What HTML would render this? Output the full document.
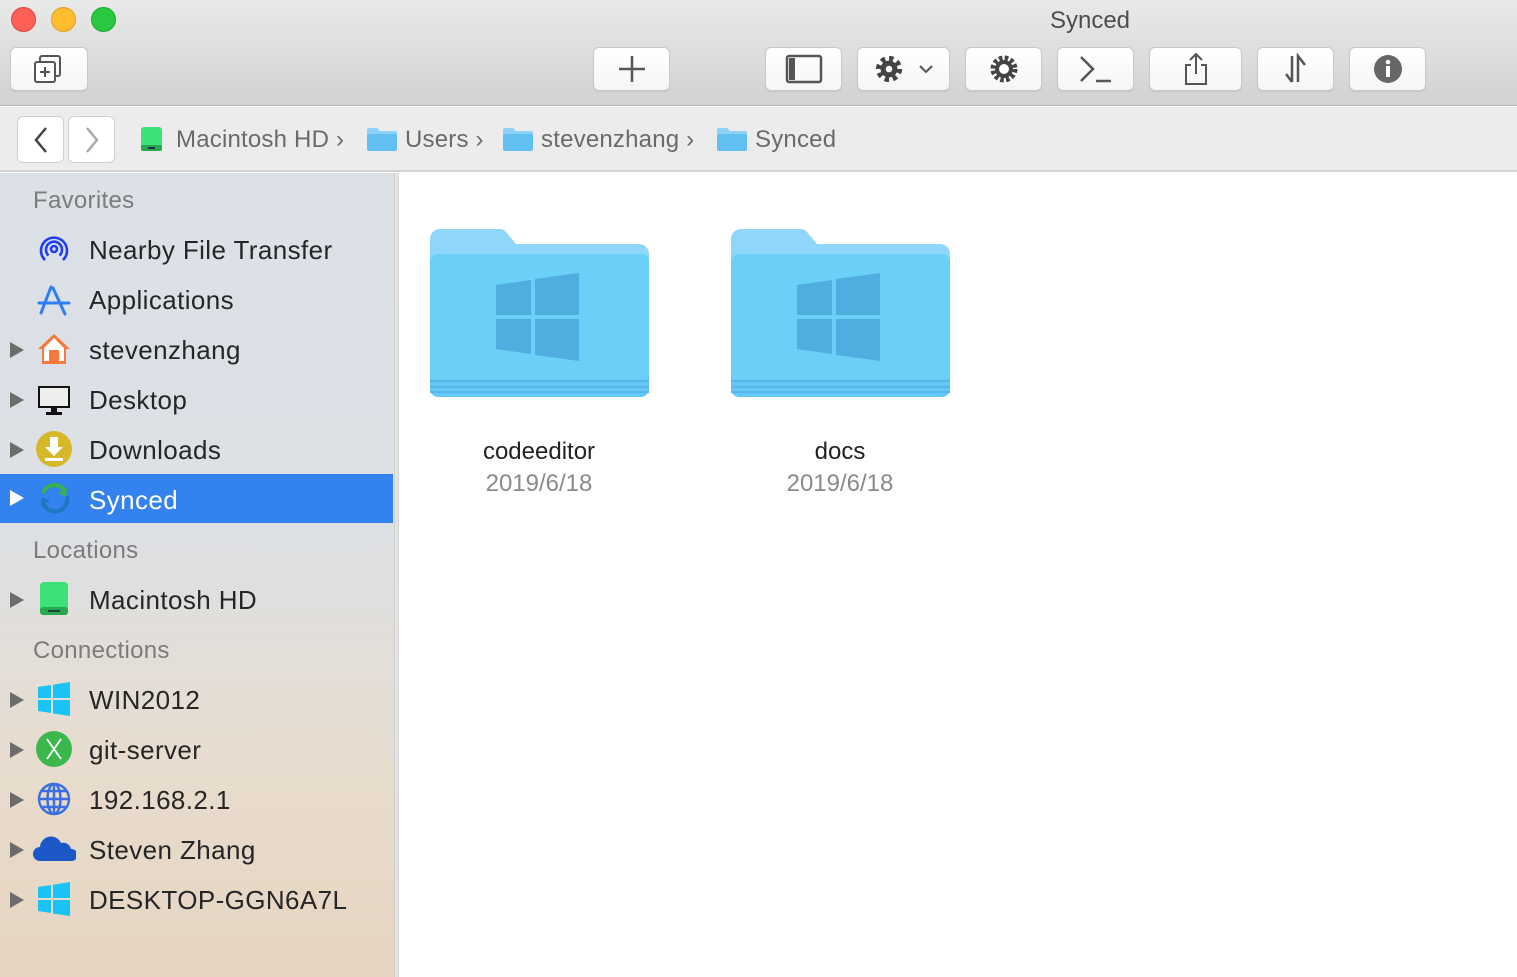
<!DOCTYPE html>
<html><head><meta charset="utf-8"><style>
*{margin:0;padding:0;box-sizing:border-box}
body{width:1517px;height:977px;overflow:hidden;font-family:"Liberation Sans",sans-serif;background:#fff;position:relative}
.abs{position:absolute}
#top{left:0;top:0;width:1517px;height:106px;background:linear-gradient(#e9e9e9,#d2d2d2);border-bottom:1px solid #b9b9b9}
.tl{position:absolute;top:7px;width:25px;height:25px;border-radius:50%}
.btn{position:absolute;top:47px;height:44px;background:linear-gradient(#fff,#f6f6f6);border:1px solid #c9c9c9;border-radius:6px;box-shadow:0 1px 1px rgba(0,0,0,.08);display:flex;align-items:center;justify-content:center}
#path{left:0;top:107px;width:1517px;height:65px;background:#ececec;border-bottom:2px solid #d3d3d3}
.pb{position:absolute;top:116px;width:47px;height:47px;background:#fff;border:1px solid #d0d0d0;border-radius:6px;display:flex;align-items:center;justify-content:center}
.pt{position:absolute;top:126px;font-size:24px;color:#6a6a6a;white-space:nowrap;letter-spacing:.2px}
#side{left:0;top:173px;width:394px;height:804px;background:linear-gradient(#dce1e8 0%,#dde0e4 45%,#e8dccd 75%,#e6d4c1 100%)}
#div{left:394px;top:173px;width:5px;height:804px;background:#e3e3e3;border-left:1px solid #cfcfcf;border-right:1px solid #d6d6d6}
.hd{position:absolute;left:33px;font-size:24px;color:#7b7b7b;letter-spacing:.3px}
.it{position:absolute;left:89px;font-size:26px;color:#262626;white-space:nowrap;letter-spacing:.4px}
.tri{position:absolute;left:10px;width:0;height:0;border-top:8px solid transparent;border-bottom:8px solid transparent;border-left:14px solid #6c6c6c}
.ic{position:absolute;left:36px;width:36px;height:36px}
.fl{position:absolute;font-size:24px;color:#222;text-align:center;width:260px}
.fd{position:absolute;font-size:24px;color:#8a8a8a;text-align:center;width:260px}
</style></head><body>
<div id="top" class="abs"></div>
<div class="tl" style="left:11px;background:#fe5f57;border:1px solid #e0443e"></div>
<div class="tl" style="left:51px;background:#febc2e;border:1px solid #dea123"></div>
<div class="tl" style="left:91px;background:#28c840;border:1px solid #1aab29"></div>
<div class="abs" style="left:1000px;top:7px;width:180px;text-align:center;font-size:24px;color:#4d4d4d">Synced</div>

<div class="btn" style="left:10px;width:78px"><svg width="36" height="36" viewBox="0 0 36 36" fill="none" stroke="#555" stroke-width="2"><rect x="9" y="5" width="20" height="20" rx="2"/><rect x="4" y="11" width="20" height="20" rx="2" fill="#fff"/><path d="M14 16v10M9 21h10"/></svg></div>
<div class="btn" style="left:593px;width:77px"><svg width="34" height="34" viewBox="0 0 34 34" stroke="#555" stroke-width="2.5"><path d="M17 4v26M4 17h26"/></svg></div>
<div class="btn" style="left:765px;width:77px"><svg width="38" height="30" viewBox="0 0 38 30" fill="none" stroke="#555" stroke-width="2.5"><rect x="2" y="2" width="34" height="26" rx="2"/><rect x="4" y="4" width="6" height="22" fill="#555" stroke="none"/></svg></div>
<div class="btn" style="left:857px;width:93px"><svg width="30" height="30" viewBox="0 0 32 32" style="margin-right:14px"><circle cx="16" cy="16" r="11" fill="none" stroke="#444" stroke-width="6" stroke-dasharray="4.5 4.1"/><circle cx="16" cy="16" r="9" fill="#444"/><circle cx="16" cy="16" r="3.5" fill="#fff"/></svg><svg width="16" height="10" viewBox="0 0 16 10" fill="none" stroke="#555" stroke-width="2"><path d="M2 2l6 6 6-6"/></svg></div>
<div class="btn" style="left:965px;width:77px"><svg width="32" height="32" viewBox="0 0 32 32"><circle cx="16" cy="16" r="11" fill="none" stroke="#444" stroke-width="5" stroke-dasharray="3.5 2.3"/><circle cx="16" cy="16" r="9" fill="#444"/><circle cx="16" cy="16" r="5" fill="#fff"/></svg></div>
<div class="btn" style="left:1057px;width:77px"><svg width="40" height="32" viewBox="0 0 40 32" fill="none" stroke="#555" stroke-width="2.5"><path d="M5 4l12 12-12 12M20 28h15"/></svg></div>
<div class="btn" style="left:1149px;width:93px"><svg width="28" height="34" viewBox="0 0 28 34" fill="none" stroke="#555" stroke-width="2"><path d="M9 13H4v19h20V13h-5M14 22V2M8 8l6-6 6 6"/></svg></div>
<div class="btn" style="left:1257px;width:77px"><svg width="30" height="32" viewBox="0 0 30 32" fill="none" stroke="#555" stroke-width="2.5"><path d="M11 3v26M5 21l6 8M17 29V3l7 9"/></svg></div>
<div class="btn" style="left:1349px;width:77px"><svg width="30" height="30" viewBox="0 0 30 30"><circle cx="15" cy="15" r="14" fill="#666"/><rect x="13" y="12" width="4" height="11" fill="#fff"/><circle cx="15" cy="8" r="2.3" fill="#fff"/></svg></div>

<div id="path" class="abs"></div>
<div class="pb" style="left:17px"><svg width="16" height="28" viewBox="0 0 16 28" fill="none" stroke="#444" stroke-width="2.5"><path d="M13 2L3 14l10 12"/></svg></div>
<div class="pb" style="left:68px"><svg width="16" height="28" viewBox="0 0 16 28" fill="none" stroke="#aaa" stroke-width="2.5"><path d="M3 2l10 12-10 12"/></svg></div>
<svg class="abs" style="left:140px;top:126px" width="23" height="26" viewBox="0 0 23 26"><rect x="1" y="1" width="21" height="24" rx="3" fill="#3ce277"/><rect x="1" y="19" width="21" height="6" rx="2" fill="#27a84f"/><path d="M8 22h7" stroke="#114" stroke-width="1.5"/></svg>
<div class="pt" style="left:176px">Macintosh HD ›</div>
<svg class="abs" style="left:366px;top:127px" width="32" height="25" viewBox="0 0 32 25"><path d="M1 3a2 2 0 012-2h8l3 3h15a2 2 0 012 2v16a2 2 0 01-2 2H3a2 2 0 01-2-2z" fill="#8fd0f7"/><rect x="1" y="7" width="30" height="17" rx="2" fill="#62bff2"/></svg>
<div class="pt" style="left:405px">Users ›</div>
<svg class="abs" style="left:502px;top:127px" width="32" height="25" viewBox="0 0 32 25"><path d="M1 3a2 2 0 012-2h8l3 3h15a2 2 0 012 2v16a2 2 0 01-2 2H3a2 2 0 01-2-2z" fill="#8fd0f7"/><rect x="1" y="7" width="30" height="17" rx="2" fill="#62bff2"/></svg>
<div class="pt" style="left:541px">stevenzhang ›</div>
<svg class="abs" style="left:716px;top:127px" width="32" height="25" viewBox="0 0 32 25"><path d="M1 3a2 2 0 012-2h8l3 3h15a2 2 0 012 2v16a2 2 0 01-2 2H3a2 2 0 01-2-2z" fill="#8fd0f7"/><rect x="1" y="7" width="30" height="17" rx="2" fill="#62bff2"/></svg>
<div class="pt" style="left:755px">Synced</div>

<div id="side" class="abs"></div>
<div id="div" class="abs"></div>
<div class="abs" style="left:0;top:474px;width:393px;height:49px;background:#3482ef"></div>

<div class="hd" style="top:187px">Favorites</div>
<svg class="ic" style="top:232px" viewBox="0 0 36 36" fill="none" stroke="#1f3df5" stroke-width="2.6"><path d="M9 28a13 13 0 1118 0"/><path d="M12.5 23.5a8 8 0 1111 0"/><circle cx="18" cy="17" r="3"/></svg>
<div class="it" style="top:235px">Nearby File Transfer</div>
<svg class="ic" style="top:282px" viewBox="0 0 36 36" fill="none" stroke="#2f7df5" stroke-width="3" stroke-linecap="round"><path d="M15 5L5 31M17 6l12 26M3 21h30"/></svg>
<div class="it" style="top:285px">Applications</div>
<div class="tri" style="top:342px"></div>
<svg class="ic" style="top:331px" viewBox="0 0 36 36"><path d="M18 3L2 18h4v15h24V18h4z" fill="#f5793a"/><path d="M18 7L8 17v13h20V17z" fill="#fff"/><rect x="13" y="19" width="10" height="11" fill="#f5793a"/></svg>
<div class="it" style="top:335px">stevenzhang</div>
<div class="tri" style="top:392px"></div>
<svg class="ic" style="top:382px" viewBox="0 0 36 36"><rect x="2" y="4" width="32" height="22" fill="#111"/><rect x="4" y="6" width="28" height="18" fill="#eee"/><rect x="15" y="26" width="6" height="4" fill="#111"/><rect x="10" y="30" width="16" height="3" fill="#111"/></svg>
<div class="it" style="top:385px">Desktop</div>
<div class="tri" style="top:442px"></div>
<svg class="ic" style="top:431px" viewBox="0 0 36 36"><circle cx="18" cy="18" r="18" fill="#d6b92b"/><path d="M14 6h8v10h5l-9 9-9-9h5z" fill="#fff"/><rect x="9" y="27" width="18" height="3" fill="#fff"/></svg>
<div class="it" style="top:435px">Downloads</div>
<div class="tri" style="top:490px;border-left-color:#fff"></div>
<svg class="ic" style="top:480px" viewBox="0 0 36 36" fill="none" stroke-width="4"><path d="M7 13a12 12 0 0121-3" stroke="#38b24a"/><path d="M31 16a12 12 0 01-24 6" stroke="#1e78c0"/><path d="M31 8l-1 9-8-4z" fill="#38b24a" stroke="none"/><path d="M4 26l2-9 8 4z" fill="#1e78c0" stroke="none"/></svg>
<div class="it" style="top:485px;color:#fff">Synced</div>

<div class="hd" style="top:537px">Locations</div>
<div class="tri" style="top:592px"></div>
<svg class="ic" style="top:581px" viewBox="0 0 36 36"><rect x="4" y="1" width="28" height="33" rx="4" fill="#3ce277"/><rect x="4" y="26" width="28" height="8" rx="3" fill="#27a84f"/><path d="M12 30h12" stroke="#123" stroke-width="1.5"/></svg>
<div class="it" style="top:585px">Macintosh HD</div>

<div class="hd" style="top:637px">Connections</div>
<div class="tri" style="top:692px"></div>
<svg class="ic" style="top:681px" viewBox="0 0 36 36" fill="#19c3f5"><path d="M2 6l13-2v13H2zM17 3.7L34 1v16H17zM2 19h13v13L2 30zM17 19h17v16l-17-2.5z"/></svg>
<div class="it" style="top:685px">WIN2012</div>
<div class="tri" style="top:742px"></div>
<svg class="ic" style="top:731px" viewBox="0 0 36 36"><circle cx="18" cy="18" r="18" fill="#3bb84c"/><path d="M11 8l14 20M25 8L11 28" stroke="#fff" stroke-width="1.8"/></svg>
<div class="it" style="top:735px">git-server</div>
<div class="tri" style="top:792px"></div>
<svg class="ic" style="top:781px" viewBox="0 0 36 36" fill="none" stroke="#3a6fe0" stroke-width="2.4"><circle cx="18" cy="18" r="15"/><ellipse cx="18" cy="18" rx="6.5" ry="15"/><path d="M3 18h30M18 3v30M6 10h24M6 26h24"/></svg>
<div class="it" style="top:785px">192.168.2.1</div>
<div class="tri" style="top:842px"></div>
<svg class="abs" style="left:32px;top:834px" width="44" height="28" viewBox="0 0 44 28"><path d="M8 27a7 7 0 010-14 11 11 0 0121-4 8 8 0 0110 6 6 6 0 011 12z" fill="#1c57c7"/></svg>
<div class="it" style="top:835px">Steven Zhang</div>
<div class="tri" style="top:892px"></div>
<svg class="ic" style="top:881px" viewBox="0 0 36 36" fill="#19c3f5"><path d="M2 6l13-2v13H2zM17 3.7L34 1v16H17zM2 19h13v13L2 30zM17 19h17v16l-17-2.5z"/></svg>
<div class="it" style="top:885px">DESKTOP-GGN6A7L</div>

<svg class="abs" style="left:430px;top:229px" width="219" height="168" viewBox="0 0 219 168"><path d="M0 10a10 10 0 0110-10h60a8 8 0 016 3l10 12h123a10 10 0 0110 10v135H0z" fill="#8fd6fb"/><rect x="0" y="25" width="219" height="143" rx="8" fill="#64c8f5"/><rect x="0" y="25" width="219" height="128" rx="8" fill="#6bd0f7"/><path d="M0 152h219M0 158h219M0 163h219" stroke="#5ab4ec" stroke-width="2"/><g fill="#50ade0"><path d="M66 56l35-5v35H66zM105 50l44-6v42h-44zM66 90h35v35l-35-5zM105 90h44v42l-44-6z"/></g></svg>
<div class="fl" style="left:409px;top:438px">codeeditor</div>
<div class="fd" style="left:409px;top:470px">2019/6/18</div>
<svg class="abs" style="left:731px;top:229px" width="219" height="168" viewBox="0 0 219 168"><path d="M0 10a10 10 0 0110-10h60a8 8 0 016 3l10 12h123a10 10 0 0110 10v135H0z" fill="#8fd6fb"/><rect x="0" y="25" width="219" height="143" rx="8" fill="#64c8f5"/><rect x="0" y="25" width="219" height="128" rx="8" fill="#6bd0f7"/><path d="M0 152h219M0 158h219M0 163h219" stroke="#5ab4ec" stroke-width="2"/><g fill="#50ade0"><path d="M66 56l35-5v35H66zM105 50l44-6v42h-44zM66 90h35v35l-35-5zM105 90h44v42l-44-6z"/></g></svg>
<div class="fl" style="left:710px;top:438px">docs</div>
<div class="fd" style="left:710px;top:470px">2019/6/18</div>
</body></html>
